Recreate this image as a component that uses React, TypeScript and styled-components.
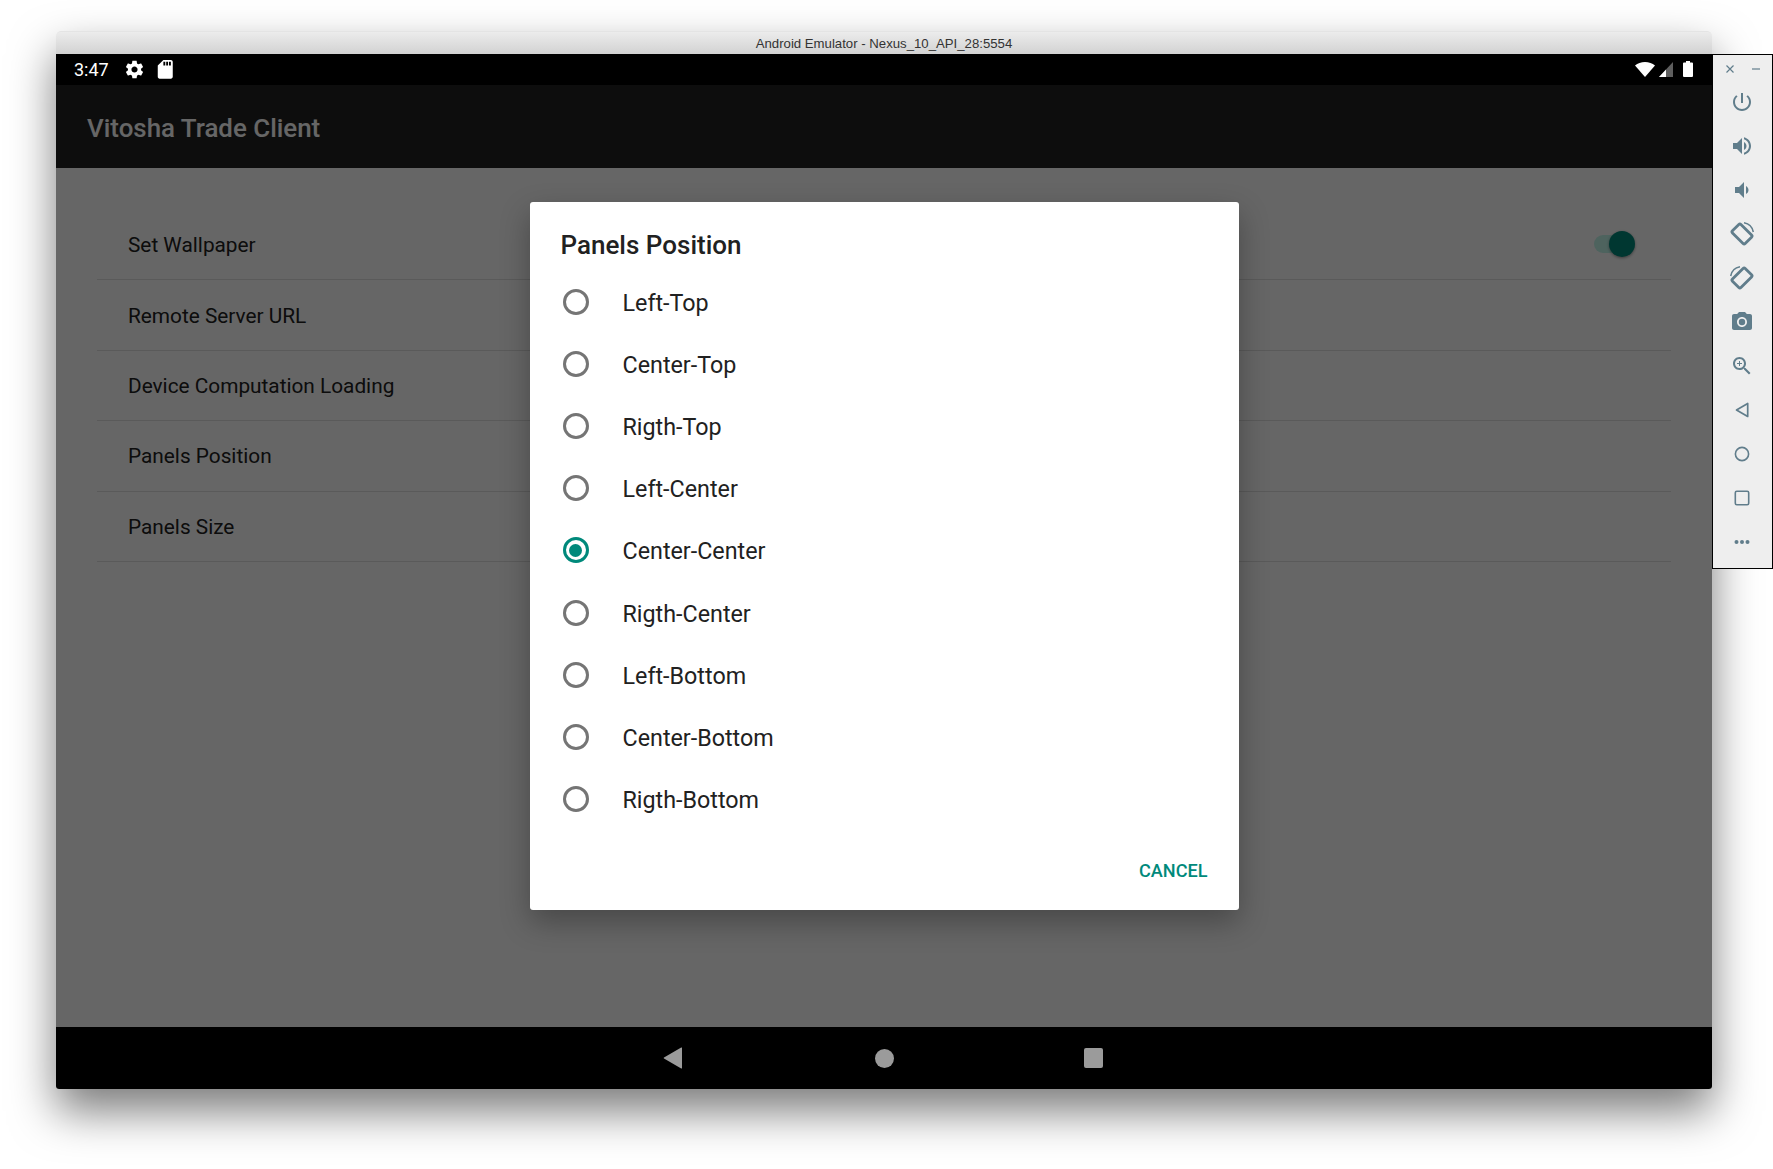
import { createGlobalStyle, styled } from "styled-components";

const settings = ["Set Wallpaper", "Remote Server URL", "Device Computation Loading", "Panels Position", "Panels Size"];

const positions = [
  "Left-Top",
  "Center-Top",
  "Rigth-Top",
  "Left-Center",
  "Center-Center",
  "Rigth-Center",
  "Left-Bottom",
  "Center-Bottom",
  "Rigth-Bottom",
];

const selected = "Center-Center";

const RotateGlyph = () => (
  <>
    <rect x="7" y="4" width="12" height="18" rx="1.500" transform="rotate(-45 13 13)" fill="none" stroke="#607d8b" strokeWidth="2.800" />
    <path d="M15 1.800A11.500 11.500 0 0 1 24.300 11" fill="none" stroke="#607d8b" strokeWidth="1.500" />
  </>
);

const tools = [
  { id: "power", view: 24, body: <path d="M13 3h-2v10h2V3zm4.830 2.170l-1.420 1.420C17.990 7.860 19 9.810 19 12c0 3.870-3.130 7-7 7s-7-3.130-7-7c0-2.190 1.010-4.140 2.580-5.420L6.170 5.170C4.230 6.820 3 9.260 3 12c0 4.970 4.030 9 9 9s9-4.030 9-9c0-2.740-1.230-5.180-3.170-6.830z" /> },
  { id: "volume-up", view: 24, body: <path d="M3 9v6h4l5 5V4L7 9H3zm13.500 3c0-1.770-1.020-3.290-2.500-4.030v8.050c1.480-.73 2.500-2.250 2.500-4.020zM14 3.230v2.060c2.890.86 5 3.540 5 6.710s-2.110 5.850-5 6.710v2.060c4.010-.91 7-4.490 7-8.770s-2.990-7.860-7-8.770z" /> },
  { id: "volume-down", view: 24, body: <path d="M18.500 12c0-1.770-1.020-3.290-2.500-4.030v8.050c1.480-.73 2.500-2.250 2.500-4.020zM5 9v6h4l5 5V4L9 9H5z" /> },
  { id: "rotate-right", view: 26, body: <RotateGlyph /> },
  { id: "rotate-left", view: 26, body: <g transform="translate(26 0) scale(-1 1)"><RotateGlyph /></g> },
  { id: "camera", view: 24, body: <path d="M12 8.800a3.200 3.200 0 1 0 0 6.400 3.200 3.200 0 0 0 0-6.400zM9 2 7.170 4H4c-1.100 0-2 .9-2 2v12c0 1.100.9 2 2 2h16c1.100 0 2-.9 2-2V6c0-1.100-.9-2-2-2h-3.170L15 2H9zm3 15c-2.760 0-5-2.240-5-5s2.240-5 5-5 5 2.240 5 5-2.240 5-5 5z" /> },
  { id: "zoom", view: 24, body: <path d="M15.500 14h-.79l-.28-.27C15.410 12.590 16 11.110 16 9.500 16 5.910 13.090 3 9.500 3S3 5.910 3 9.500 5.910 16 9.500 16c1.610 0 3.090-.59 4.230-1.570l.27.28v.79l5 4.990L20.490 19l-4.990-5zm-6 0C7.010 14 5 11.990 5 9.500S7.010 5 9.500 5 14 7.010 14 9.500 11.990 14 9.500 14zm2.500-4h-2v2H9v-2H7V9h2V7h1v2h2v1z" /> },
  { id: "back", view: 24, body: <path d="M17.700 5.500v13L6.500 12z" fill="none" stroke="#607d8b" strokeWidth="1.700" strokeLinejoin="round" /> },
  { id: "home", view: 24, body: <circle cx="12" cy="12" r="6.600" fill="none" stroke="#607d8b" strokeWidth="1.600" /> },
  { id: "overview", view: 24, body: <rect x="5.300" y="5.300" width="13.400" height="13.400" rx="1.500" fill="none" stroke="#607d8b" strokeWidth="1.600" /> },
  { id: "more", view: 24, body: <path d="M6.500 10a2 2 0 1 0 0 4 2 2 0 0 0 0-4zm5.500 0a2 2 0 1 0 0 4 2 2 0 0 0 0-4zm5.500 0a2 2 0 1 0 0 4 2 2 0 0 0 0-4z" /> },
];

export default function App() {
  return (
    <>
      <GlobalStyle />
      <Stage>
        <Window>
          <TitleBar>Android Emulator - Nexus_10_API_28:5554</TitleBar>

          <StatusBar>
            <Time>3:47</Time>
            <StatusIcon $size={21} viewBox="0 0 24 24">
              <path d="M19.430 12.980c.04-.32.07-.64.07-.98s-.03-.66-.07-.98l2.110-1.650c.19-.15.24-.42.12-.64l-2-3.460c-.12-.22-.39-.3-.61-.22l-2.490 1c-.52-.4-1.080-.73-1.690-.98l-.38-2.650C14.460 2.180 14.250 2 14 2h-4c-.25 0-.46.18-.49.42l-.38 2.650c-.61.25-1.170.59-1.690.98l-2.490-1c-.23-.09-.49 0-.61.22l-2 3.460c-.13.22-.07.49.12.64l2.110 1.650c-.04.32-.07.65-.07.98s.03.66.07.98l-2.110 1.650c-.19.15-.24.42-.12.64l2 3.460c.12.22.39.3.61.22l2.490-1c.52.4 1.080.73 1.690.98l.38 2.650c.03.24.24.42.49.42h4c.25 0 .46-.18.49-.42l.38-2.650c.61-.25 1.170-.59 1.690-.98l2.490 1c.23.09.49 0 .61-.22l2-3.460c.12-.22.07-.49-.12-.64l-2.110-1.650zM12 15.500c-1.930 0-3.500-1.570-3.500-3.500s1.570-3.500 3.500-3.500 3.500 1.570 3.500 3.500-1.570 3.500-3.500 3.500z" />
            </StatusIcon>
            <StatusIcon $size={22.5} viewBox="0 0 24 24">
              <path d="M18 2h-8L4.020 8 4 20c0 1.100.9 2 2 2h12c1.100 0 2-.9 2-2V4c0-1.100-.9-2-2-2zm-6 6h-2V4h2v4zm3 0h-2V4h2v4zm3 0h-2V4h2v4z" />
            </StatusIcon>
            <StatusRight>
              <svg width="20" height="15" viewBox="0 0 20 15">
                <path d="M10 15 0 3.400C2.600 1.300 6.100 0 10 0s7.400 1.300 10 3.400z" fill="#fff" />
              </svg>
              <svg width="14" height="15" viewBox="0 0 14 15">
                <path d="M0 15 14 0v15z" fill="#5f5f5f" />
                <path d="M0 15 7 7.500V15z" fill="#fff" />
              </svg>
              <BatterySvg width="10" height="16" viewBox="0 0 10 16">
                <path d="M3 0h4v1.500h2a1 1 0 0 1 1 1V15a1 1 0 0 1-1 1H1a1 1 0 0 1-1-1V2.500a1 1 0 0 1 1-1h2z" fill="#fff" />
              </BatterySvg>
            </StatusRight>
          </StatusBar>

          <Main>
            <AppBar>Vitosha Trade Client</AppBar>
            <SettingsList>
              {settings.map((name, i) => (
                <SettingRow key={name}>
                  <span>{name}</span>
                  {i === 0 && (
                    <Switch>
                      <SwitchThumb />
                    </Switch>
                  )}
                </SettingRow>
              ))}
            </SettingsList>

            <Scrim>
              <Dialog>
                <DialogTitle>Panels Position</DialogTitle>
                {positions.map((name) => (
                  <OptionRow key={name}>
                    <Radio $checked={name === selected} />
                    {name}
                  </OptionRow>
                ))}
                <DialogFooter>
                  <CancelButton>CANCEL</CancelButton>
                </DialogFooter>
              </Dialog>
            </Scrim>
          </Main>

          <NavBar>
            <NavBack width="20" height="22" viewBox="0 0 20 22">
              <path d="M19 1v20a.5.5 0 0 1-.8.4L1 11.500a.6.6 0 0 1 0-1L18.200.6A.5.5 0 0 1 19 1z" fill="#9b9b9b" />
            </NavBack>
            <NavCircle />
            <NavSquare />
          </NavBar>
        </Window>

        <ToolPanel>
          <ToolHeader>
            <svg width="10" height="10" viewBox="0 0 10 10">
              <path d="M1.500 1.500l7 7M8.500 1.500l-7 7" stroke="#607d8b" strokeWidth="1.200" />
            </svg>
            <svg width="10" height="10" viewBox="0 0 10 10">
              <path d="M1 5h8" stroke="#607d8b" strokeWidth="1.200" />
            </svg>
          </ToolHeader>
          {tools.map((tool) => (
            <ToolButton key={tool.id}>
              <ToolIcon $size={tool.view} viewBox={`0 0 ${tool.view} ${tool.view}`}>
                {tool.body}
              </ToolIcon>
            </ToolButton>
          ))}
        </ToolPanel>
      </Stage>
    </>
  );
}

const GlobalStyle = createGlobalStyle`
  html, body {
    margin: 0;
    background: #fff;
    overflow: hidden;
  }

  * {
    box-sizing: border-box;
  }
`;

const Stage = styled.div`
  display: flex;
  align-items: flex-start;
  width: 1773px;
  height: 1169px;
  padding: 31px 0 0 56px;
  overflow: hidden;
  font-family: Roboto, "Liberation Sans", sans-serif;
`;

const Window = styled.div`
  width: 1656px;
  height: 1058px;
  flex-shrink: 0;
  display: flex;
  flex-direction: column;
  border-radius: 5px 5px 3px 3px;
  box-shadow: 0 22px 45px rgba(0, 0, 0, 0.52);
`;

const TitleBar = styled.div`
  height: 22.500px;
  display: flex;
  align-items: center;
  justify-content: center;
  padding-top: 1px;
  border-radius: 5px 5px 0 0;
  border-top: 1px solid #e4e4e4;
  background: linear-gradient(#ececec, #d2d2d2);
  font-family: "Liberation Sans", Arial, sans-serif;
  font-size: 13.200px;
  color: #333;
`;

const StatusBar = styled.div`
  height: 31.500px;
  display: flex;
  align-items: center;
  padding: 0 19px 0 18px;
  background: #000;
  color: #fff;
`;

const Time = styled.span`
  font-size: 18px;
  margin-right: 15px;
`;

const StatusIcon = styled.svg<{ $size: number }>`
  width: ${(p) => p.$size}px;
  height: ${(p) => p.$size}px;
  margin-right: 9px;
  fill: #fff;
`;

const StatusRight = styled.div`
  margin-left: auto;
  display: flex;
  align-items: center;
  gap: 4px;
`;

const BatterySvg = styled.svg`
  margin-left: 6px;
`;

const Main = styled.div`
  position: relative;
  flex: 1;
  display: flex;
  flex-direction: column;
  background: #fff;
`;

const AppBar = styled.div`
  height: 83px;
  display: flex;
  align-items: center;
  padding: 2px 0 0 31px;
  background: #212121;
  color: #fff;
  font-size: 25.900px;
  font-weight: 500;
`;

const SettingsList = styled.div`
  display: flex;
  flex-direction: column;
  padding: 42px 41px 0 41px;
`;

const SettingRow = styled.div`
  height: 70.400px;
  display: flex;
  align-items: center;
  justify-content: space-between;
  padding: 1px 40px 0 31px;
  border-bottom: 1px solid #e0e0e0;
  color: #212121;
  font-size: 20.800px;
`;

const Switch = styled.div`
  position: relative;
  width: 37px;
  height: 18px;
  margin-top: -3px;
  border-radius: 9px;
  background: #c2f7ec;
`;

const SwitchThumb = styled.div`
  position: absolute;
  top: -4px;
  right: -4px;
  width: 26px;
  height: 26px;
  border-radius: 50%;
  background: #00897b;
  box-shadow: 0 1px 3px rgba(0, 0, 0, 0.4);
`;

const Scrim = styled.div`
  position: absolute;
  inset: 0;
  display: flex;
  align-items: center;
  justify-content: center;
  background: rgba(0, 0, 0, 0.6);
`;

const Dialog = styled.div`
  width: 709px;
  height: 708px;
  display: flex;
  flex-direction: column;
  padding: 0 31px 0 31px;
  border-radius: 3px;
  background: #fff;
  box-shadow: 0 12px 30px rgba(0, 0, 0, 0.3);
`;

const DialogTitle = styled.h2`
  height: 70px;
  margin: 0;
  padding-top: 15px;
  display: flex;
  align-items: center;
  color: #212121;
  font-size: 26px;
  font-weight: 500;
`;

const OptionRow = styled.div`
  height: 62.100px;
  display: flex;
  align-items: center;
  color: #212121;
  font-size: 23.300px;
`;

const Radio = styled.span<{ $checked: boolean }>`
  width: 26px;
  height: 26px;
  margin: 0 34px 2px 2px;
  display: flex;
  align-items: center;
  justify-content: center;
  border-radius: 50%;
  border: 3px solid ${(p) => (p.$checked ? "#00897b" : "#757575")};

  &::after {
    content: "";
    display: ${(p) => (p.$checked ? "block" : "none")};
    width: 13px;
    height: 13px;
    border-radius: 50%;
    background: #00897b;
  }
`;

const DialogFooter = styled.div`
  flex: 1;
  display: flex;
  align-items: center;
  justify-content: flex-end;
`;

const CancelButton = styled.span`
  color: #00897b;
  font-size: 18.100px;
  font-weight: 500;
`;

const NavBar = styled.div`
  height: 62px;
  display: grid;
  grid-template-columns: repeat(3, 209.500px);
  justify-content: center;
  justify-items: center;
  align-items: center;
  border-radius: 0 0 3px 3px;
  background: #000;
`;

const NavBack = styled.svg`
  margin-right: 4px;
`;

const NavCircle = styled.div`
  width: 19px;
  height: 19px;
  border-radius: 50%;
  background: #9b9b9b;
`;

const NavSquare = styled.div`
  width: 19px;
  height: 20px;
  border-radius: 2px;
  background: #9b9b9b;
`;

const ToolPanel = styled.div`
  position: relative;
  width: 61px;
  height: 515px;
  flex-shrink: 0;
  margin-top: 23px;
  display: flex;
  flex-direction: column;
  align-items: center;
  border: 1px solid #000;
  background: #eeeeee;
`;

const ToolHeader = styled.div`
  width: 100%;
  height: 25px;
  display: flex;
  align-items: center;
  justify-content: space-between;
  padding: 3px 11px 0 12px;
`;

const ToolButton = styled.div`
  width: 100%;
  height: 44px;
  padding-right: 2px;
  display: flex;
  align-items: center;
  justify-content: center;
`;

const ToolIcon = styled.svg<{ $size: number }>`
  width: ${(p) => p.$size}px;
  height: ${(p) => p.$size}px;
  fill: #607d8b;
`;
